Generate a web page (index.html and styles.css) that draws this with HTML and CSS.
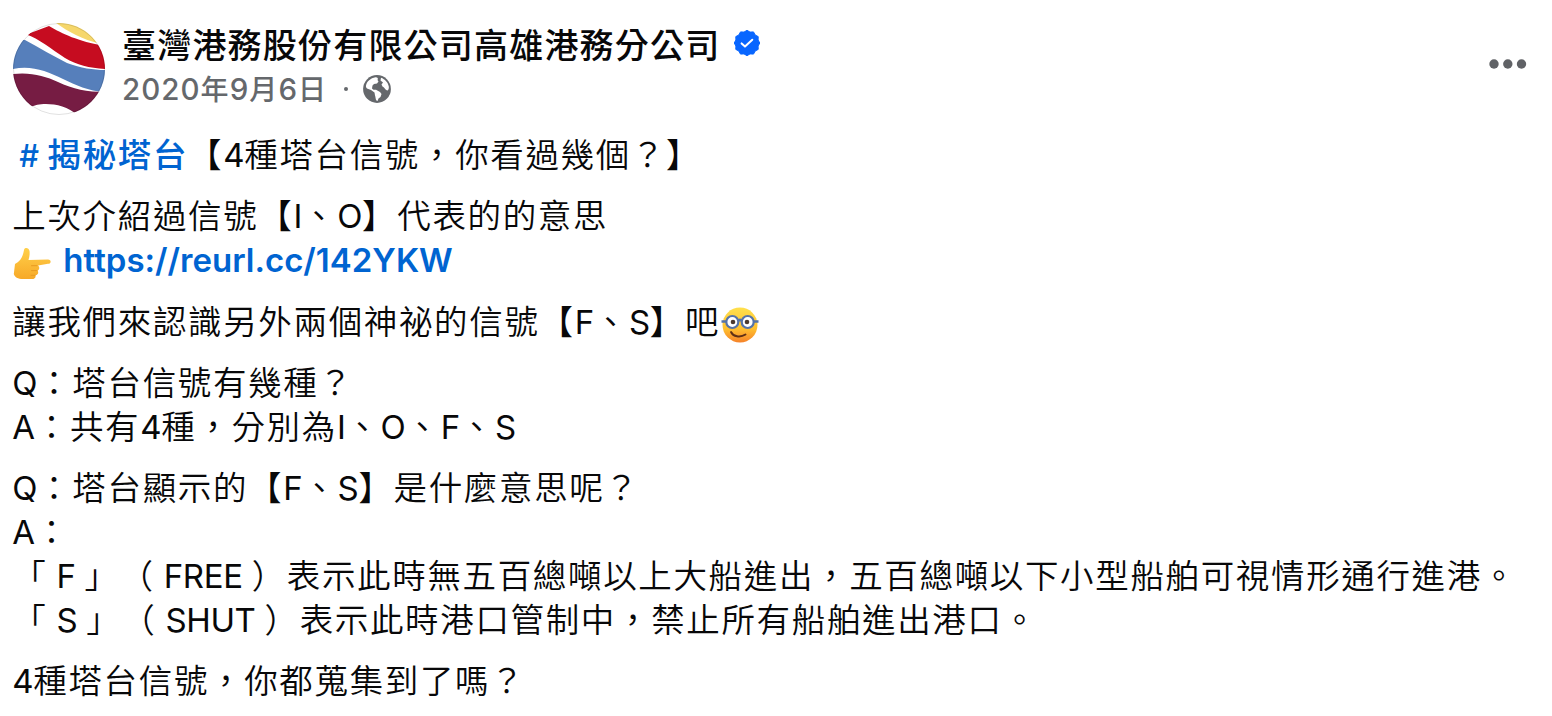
FILE: index.html
```html
<!DOCTYPE html>
<html lang="zh-Hant">
<head>
<meta charset="utf-8">
<title>臺灣港務股份有限公司高雄港務分公司</title>
<link rel="stylesheet" href="styles.css">
</head>
<body>
<article class="post">
  <header class="head">
    <svg class="avatar" viewBox="0 0 92 92">
      <defs><clipPath id="disc"><circle cx="46" cy="46" r="46"/></clipPath></defs>
      <g clip-path="url(#disc)">
        <rect width="92" height="92" fill="#fff"/>
        <path d="M43 0C56 9 68 16 88 21L92 0Z" fill="#f6d76b"/>
        <path d="M12 12L36 3C50 11 64 18 92 23V46C76 45 64 42 52 35C38 26 27 16 12 11Z" fill="#c60c20"/>
        <path d="M0 16L12 17C27 25 40 33 54 40C68 45 80 47 92 47V69C75 68 63 62 50 56C34 48 18 42 0 46Z" fill="#567fbb"/>
        <path d="M0 51C18 49 32 53 45 59C60 66 74 69 92 69V92H64C56 84 43 81 33 81C26 81 22 82 18 84L0 92Z" fill="#761c43"/>
      </g>
      <circle cx="46" cy="46" r="45.5" fill="none" stroke="#000" stroke-opacity=".12"/>
    </svg>
    <div class="who">
      <div class="name-row">
        <h1 class="name">臺灣港務股份有限公司高雄港務分公司</h1>
        <svg class="verified" viewBox="0 0 26 26">
          <path d="M13 .3L16 2.1L19.5 1.9L21.2 5L24.2 6.6L24.1 10L25.8 13L24.1 16L24.2 19.4L21.2 21L19.5 24.1L16 23.9L13 25.7L10 23.9L6.5 24.1L4.8 21L1.8 19.4L1.9 16L.2 13L1.9 10L1.8 6.6L4.8 5L6.5 1.9L10 2.1Z" fill="#0866ff" stroke="#0866ff" stroke-linejoin="round"/>
          <path d="M7.600 13.400L11 16.600L18.300 9.800" fill="none" stroke="#fff" stroke-width="2" stroke-linecap="round" stroke-linejoin="round"/>
        </svg>
      </div>
      <div class="meta">
        <span class="date"><span class="num">2020</span>年<span class="num">9</span>月<span class="num">6</span>日</span>
        <span class="dot"></span>
        <svg class="globe" viewBox="0 0 28 28">
          <circle cx="14" cy="14" r="13.9" fill="#65686c"/>
          <path d="M3 10.500C3.800 6.500 7.500 3.200 12.500 2.300C14.500 2.200 15.500 3.500 14.500 5L15.500 6.500L14 8.500L11 9L9.500 10.500L9 13.500L10.500 14.800H13L17 17L18.500 19L17.500 22L15.500 23.500L14.500 26C12.500 25.800 12.800 22.500 12 20.500L11.500 17.500L8 15L4 13.500C3 12.500 2.800 11.500 3 10.500Z" fill="#fff"/>
          <path d="M18 2.800C22 4.200 25 7.500 25.800 11.500C26 13.500 25.500 15 24.500 15.500C22.500 15.500 21.800 12.500 19.500 11.500L18.500 9.500L20 7.500L17.500 5.500Z" fill="#fff"/>
        </svg>
      </div>
    </div>
    <svg class="more" viewBox="0 0 38 10"><g fill="#606266"><circle cx="5" cy="5" r="4.7"/><circle cx="18.8" cy="5" r="4.7"/><circle cx="32.5" cy="5" r="4.7"/></g></svg>
  </header>
  <div class="body">
    <p><a class="link"><span class="hash">#</span>揭秘塔台</a>【<span class="lat">4</span>種塔台信號，你看過幾個？】</p>
    <p>上次介紹過信號【<span class="lat">I</span>、<span class="lat">O</span>】代表的的意思<br>
      <svg class="emoji hand" viewBox="0 0 38 34">
        <defs><linearGradient id="skin" x2="0" y2="1"><stop offset="0" stop-color="#ffd04a"/><stop offset="1" stop-color="#f7a928"/></linearGradient></defs>
        <path d="M2 17C8 14 10 9 11 3C11.500 0 16 .5 16.500 4C17 8 16 11 15.500 13L35 12.600C38.500 12.700 38.500 16.500 35 16.800L25 18.500C27 20 26.500 23 24.500 23.500C26 25.500 25 28 22.500 28.300C23 30.800 21.500 32 19 32H10C5 32 1.500 30 .8 27Z" fill="url(#skin)"/>
        <path d="M24 18.700H18.500M24 23.600H18.500M22 28.300H18" fill="none" stroke="#e89a22" stroke-linecap="round"/>
      </svg><a class="link lat url">https://reurl.cc/142YKW</a></p>
    <p>讓我們來認識另外兩個神祕的信號【<span class="lat">F</span>、<span class="lat">S</span>】吧<svg class="emoji nerd" viewBox="0 0 38 36">
        <defs><linearGradient id="face" x2="0" y2="1"><stop offset="0" stop-color="#ffe04d"/><stop offset=".6" stop-color="#ffc12f"/><stop offset="1" stop-color="#f5822a"/></linearGradient></defs>
        <circle cx="19" cy="18" r="17.500" fill="url(#face)"/>
        <g fill="#fff" stroke="#5573a9" stroke-width="2.200"><circle cx="11.300" cy="15" r="6"/><circle cx="26.700" cy="15" r="6"/></g>
        <path d="M.5 14.500H5M33 14.500H37.500M17 14C18 12.500 20 12.500 21 14" fill="none" stroke="#5573a9" stroke-width="2.600"/>
        <g fill="#4b3930"><circle cx="12" cy="15" r="2.300"/><circle cx="26" cy="15" r="2.300"/></g>
        <path d="M10 25C12 29.500 19 31 24.500 27.500" fill="none" stroke="#603016" stroke-width="1.900" stroke-linecap="round"/>
      </svg></p>
    <p><span class="lat">Q</span>：塔台信號有幾種？<br><span class="lat">A</span>：共有<span class="lat">4</span>種，分別為<span class="lat">I</span>、<span class="lat">O</span>、<span class="lat">F</span>、<span class="lat">S</span></p>
    <p><span class="lat">Q</span>：塔台顯示的【<span class="lat">F</span>、<span class="lat">S</span>】是什麼意思呢？<br><span class="lat">A</span>：<br>「<span class="lat"> F </span>」（<span class="lat"> FREE </span>）表示此時無五百總噸以上大船進出，五百總噸以下小型船舶可視情形通行進港。<br>「<span class="lat"> S </span>」（<span class="lat"> SHUT </span>）表示此時港口管制中，禁止所有船舶進出港口。</p>
    <p><span class="lat">4</span>種塔台信號，你都蒐集到了嗎？</p>
  </div>
</article>
</body>
</html>
```
FILE: styles.css
```css
body {
  margin: 0;
  background: #fff;
  color: #080809;
  font-family: Inter, "Noto Sans CJK TC", sans-serif;
  text-spacing-trim: space-all;
}
.post { padding: 23px 25px 0 13px; }
.head { display: flex; height: 92px; }
.avatar { width: 92px; height: 92px; flex: none; }
.who { flex: 1; margin-left: 17px; }
.name-row { display: flex; align-items: center; height: 44px; }
.name {
  margin: 1px 0 0;
  font-size: 34px;
  font-weight: 500;
  line-height: 44px;
  letter-spacing: 1.2px;
  white-space: nowrap;
}
.verified { width: 26px; height: 26px; margin: -4px 0 0 14px; }
.meta { display: flex; align-items: center; height: 44px; color: #65686c; }
.date { font-size: 28px; font-weight: 500; line-height: 44px; letter-spacing: 1.2px; white-space: nowrap; }
.num { font-size: 29.5px; letter-spacing: 1px; }
.dot { width: 4px; height: 4px; margin: 0 15px 0 17px; border-radius: 50%; background: #65686c; }
.globe { width: 28px; height: 28px; }
.more { width: 38px; height: 10px; margin-top: 36px; }
.body { margin-left: -0.7px; padding-top: 18px; font-size: 33.5px; line-height: 44px; letter-spacing: 1.65px; white-space: nowrap; }
.body p { margin: 0 0 17.3px; font-weight: 350; }
.lat { font-size: 33px; font-weight: 400; letter-spacing: -0.35px; line-height: 1; }
.link { color: #0064d1; font-weight: 500; }
.hash { display: inline-block; width: 28.2px; padding-left: 7px; font-size: 31px; font-weight: 500; line-height: 1; letter-spacing: 0; }
.url { margin-left: 12px; font-weight: 600; letter-spacing: 0; }
.emoji { display: inline-block; vertical-align: -9px; }
.hand { width: 38px; height: 34px; margin-left: 1px; }
.nerd { width: 38px; height: 36px; margin-left: 1px; }
```
